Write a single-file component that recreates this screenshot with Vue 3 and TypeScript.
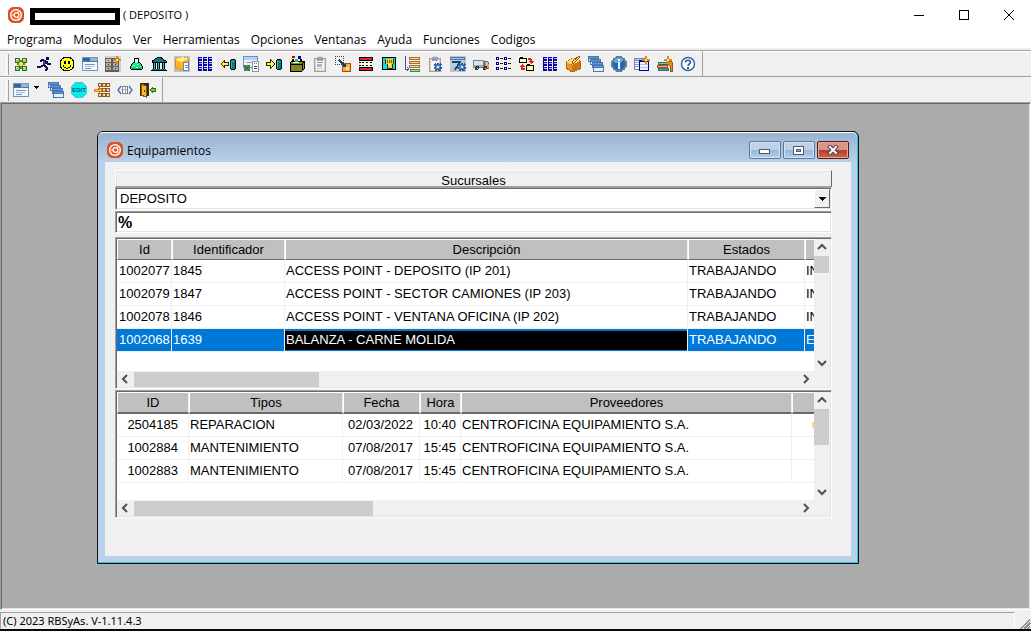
<script setup lang="ts">
import { ref } from 'vue'

interface Tool { name: string; art: string }
interface Column { label: string; cls: string }

const menus: string[] = ['Programa', 'Modulos', 'Ver', 'Herramientas', 'Opciones', 'Ventanas', 'Ayuda', 'Funciones', 'Codigos']

const r = (x: number, y: number, w: number, h: number, fill: string): string =>
  `<rect x="${x}" y="${y}" width="${w}" height="${h}" fill="${fill}"/>`
const p = (d: string, fill: string, stroke = 'none', width = 1): string =>
  `<path d="${d}" fill="${fill}" stroke="${stroke}" stroke-width="${width}"/>`
const c = (x: number, y: number, radius: number, fill: string, stroke = 'none', width = 1): string =>
  `<circle cx="${x}" cy="${y}" r="${radius}" fill="${fill}" stroke="${stroke}" stroke-width="${width}"/>`

const miniWindow = (x: number, y: number, w: number, h: number): string =>
  r(x, y, w, h, '#4a78b4') + r(x + 1, y + 3, w - 2, h - 4, '#e6f0fb') + r(x + 1, y + 1, w - 2, 1, '#5f9ad6')
const cascade = miniWindow(0, 0, 11, 6) + miniWindow(2, 3, 11, 6) + miniWindow(4, 6, 11, 6) + miniWindow(5, 9, 11, 7)
const windowArt =
  r(0, 1, 16, 14, '#7595b8') + r(1, 2, 14, 12, '#f2f7fc') + r(1, 2, 7, 3, '#2c66a4') + r(8, 2, 7, 3, '#8db8dc') +
  r(0, 5, 16, 1, '#4a7cb0') + r(3, 8, 10, 1, '#7096c4') + r(3, 10, 9, 1, '#a9c1df') + r(3, 12, 6, 1, '#7096c4')
const lattice = [1, 6, 11].map((x) =>
  [1, 3, 6, 8, 11, 13].map((y) => r(x, y, 4, 1, '#0000ff') + r(x, y + 1, 4, 1, y === 3 || y === 8 || y === 13 ? '#101040' : '#b8b8ff')).join('') + r(x, 1, 1, 14, '#000080')).join('')
const cylinder = (x: number): string =>
  r(x + 1, 3, 4, 11, '#000') + r(x, 4, 6, 9, '#000') + r(x + 1, 4, 4, 9, '#008080') + r(x + 1, 5, 3, 1, '#40b0a8') + r(x + 1, 6, 1, 6, '#48b0a8')
const gear = (x: number, y: number): string =>
  `<circle cx="${x}" cy="${y}" r="3.5" fill="#4f83c1" stroke="#285a98" stroke-width="2" stroke-dasharray="2 1"/>` + c(x, y, 1, '#d8e8fa')
const star = (x: number, y: number): string =>
  p(`M${x} ${y - 4}l1 3 3 1-3 1-1 3-1-3-3-1 3-1z`, '#ffe26a', '#d98a1c')
const clipboard =
  r(2, 2, 12, 14, '#c89a62') + r(3, 3, 10, 12, '#c3d2ef') + r(4, 4, 8, 10, '#f5f8ff') + r(5, 1, 6, 4, '#8f9db5') + r(7, 0, 2, 2, '#b9c2d2')
const box =
  p('M1 6l7-4 7 3v8l-8 3-6-4z', '#e89624', '#b8660c') + p('M1 6l7-4 7 3-8 4z', '#ffd969') + p('M7 9l8-4v8l-8 3z', '#c87714')

const mainTools: Tool[] = [
  { name: 'Módulos', art: [[2, 2], [9, 2], [2, 10], [9, 10]].map(([x, y]) => r(x, y, 5, 5, '#2d6f24') + r(x + 1, y + 1, 3, 3, '#9bd071') + r(x + 1, y + 1, 2, 1, '#e4f7c9')).join('') + r(4, 7, 8, 2, '#5a8c20') + r(7, 4, 2, 9, '#5a8c20') + r(6, 6, 4, 4, '#a09020') + r(7, 6, 2, 4, '#ffe04a') + r(6, 7, 4, 2, '#ffe04a') },
  { name: 'Ejecutar', art: r(10, 1, 3, 3, '#0b0b48') + p('M10 5L6 4 4 6M10 5l-2 4 3 3-1 3M8 9l-4 2H1M10 5l2 3h3', 'none', '#0b1048', 2) + r(7, 5, 2, 3, '#394a94') },
  { name: 'Usuario', art: c(8, 8, 7, '#ffff20', '#000') + r(5, 5, 2, 3, '#000') + r(9, 5, 2, 3, '#000') + p('M4 9l1 2 2 1h2l2-1 1-2', 'none', '#000') },
  { name: 'Ventana', art: windowArt },
  { name: 'Archivos', art: r(0, 0, 16, 16, '#d4d0cc') + [0, 7].map((x) => r(x, 2, 7, 14, '#625c58') + r(x + 1, 3, 5, 3, '#c8c4c0') + r(x + 1, 7, 5, 3, '#b0aca8') + r(x + 1, 11, 5, 3, '#b0aca8') + r(x + 3, 4, 1, 1, '#333') + r(x + 3, 8, 1, 1, '#333') + r(x + 3, 12, 1, 1, '#333')).join('') + star(12, 4) },
  { name: 'Laboratorio', art: r(6, 2, 5, 1, '#000') + r(6, 3, 1, 3, '#000') + r(10, 3, 1, 3, '#000') + r(7, 3, 3, 3, '#dff') + r(5, 6, 7, 1, '#000') + r(4, 7, 9, 1, '#000') + r(3, 8, 11, 2, '#000') + r(2, 10, 13, 3, '#000') + r(3, 13, 11, 1, '#000') + r(7, 6, 3, 1, '#8fe') + r(5, 7, 7, 1, '#12e878') + r(4, 8, 9, 2, '#12e878') + r(3, 10, 11, 3, '#12e878') + r(5, 9, 2, 1, '#d0ffe0') + r(9, 8, 1, 1, '#fff') + r(8, 11, 2, 1, '#fff') + r(4, 12, 9, 1, '#00b070') },
  { name: 'Bancos', art: p('M1 6V5l5-3V1h4v1l5 3v1z', '#008080', '#000') + r(1, 6, 14, 1, '#000') + [2, 6, 11].map((x) => r(x, 7, 3, 6, '#000') + r(x + 1, 7, 1, 6, '#50c0b8')).join('') + r(1, 13, 14, 1, '#008080') + r(0, 14, 16, 1, '#000') },
  { name: 'Productos', art: r(0, 0, 16, 16, '#c0c0c0') + p('M1 4l7-3 6 2v8l-7 3-6-3z', '#ffb51e', '#e88c00') + p('M1 4l7-3 6 2-7 3z', '#fff08a') + r(9, 6, 6, 9, '#6489b6') + r(10, 7, 4, 7, '#fff') + r(11, 9, 3, 1, '#6a90c0') + r(11, 11, 3, 1, '#6a90c0') },
  { name: 'Planilla', art: lattice },
  { name: 'Retirar', art: cylinder(10) + p('M0 8l5-5v3h4v4H5v3z', '#222') + p('M1 8l3-3v2h4v2H4v2z', '#ff0') },
  { name: 'Servidor', art: r(0, 0, 15, 12, '#6d91b9') + r(1, 1, 13, 3, '#b2d1f0') + r(1, 4, 13, 7, '#eef5fc') + r(3, 6, 7, 1, '#8ba7c8') + r(9, 5, 7, 11, '#8693a6') + r(10, 6, 5, 9, '#fff') + r(11, 7, 1, 1, '#c44') + r(13, 7, 1, 1, '#678') + r(11, 10, 3, 1, '#345') + r(11, 12, 3, 1, '#345') + c(4, 12, 3, '#548b57') + '<path d="M1 9l6 6M7 9l-6 6" stroke="#2f633b" stroke-width="1"/>' },
  { name: 'Ingresar', art: cylinder(10) + p('M0 6h4V3l5 5-5 5v-3H0z', '#222') + p('M1 7h4V5l3 3-3 3V9H1z', '#ff0') },
  { name: 'Depósito', art: p('M1 7l2-2h12v8l-2 2H1z', '#8b8420', '#000') + p('M2 8h11v6M13 8l2-2', 'none', '#000') + r(3, 0, 3, 2, '#d00') + r(9, 0, 3, 3, '#00c') + r(6, 3, 3, 3, '#00d060') + r(11, 3, 2, 2, '#000') + r(3, 3, 2, 2, '#000') + r(4, 6, 6, 1, '#fff') },
  { name: 'Portapapeles', art: clipboard + r(5, 6, 6, 1, '#6e94d0') + r(5, 8, 5, 3, '#9db9e2') + r(5, 12, 6, 1, '#b9cae8') },
  { name: 'Mover', art: [0, 2, 4, 6, 8].map((n) => r(n, 0, 1, 1, '#444') + r(n, 8, 1, 1, '#444') + r(0, n, 1, 1, '#444') + r(8, n, 1, 1, '#444')).join('') + r(7, 7, 9, 9, '#a94f12') + r(8, 8, 7, 7, '#ffa63a') + r(11, 11, 3, 3, '#ffe18a') + '<path d="M4 4l6 6" stroke="#173b80" stroke-width="1.5"/>' + p('M11 7v4H7z', '#173b80') },
  { name: 'Separar', art: r(1, 1, 14, 4, '#000') + r(2, 2, 12, 2, '#e61e1e') + [1, 4, 8, 12].map((x) => r(x, 6, 2, 1, '#000') + r(x, 9, 2, 1, '#000')).join('') + r(2, 7, 12, 2, '#fff') + r(1, 11, 14, 4, '#000') + r(2, 12, 12, 2, '#e61e1e') },
  { name: 'Autorizar', art: r(1, 1, 14, 13, '#000') + r(2, 2, 12, 11, '#00e5e8') + r(4, 3, 9, 5, '#403000') + r(5, 3, 7, 5, '#ffd22a') + r(6, 8, 6, 5, '#403000') + r(7, 8, 4, 4, '#ffd22a') + r(6, 4, 1, 3, '#8d5a00') + r(8, 4, 1, 3, '#8d5a00') + r(10, 4, 1, 3, '#8d5a00') + r(7, 8, 2, 1, '#fff') },
  { name: 'Ordenar', art: p('M1 0v13h4M3 11l2 2-2 2', 'none', '#315a9c') + [1, 5, 9].map((y) => r(5, y, 11, 3, '#a76b32') + r(6, y + 1, 9, 1, '#ffd78c')).join('') + r(6, 13, 10, 3, '#478746') + r(7, 14, 8, 1, '#a4df81') },
  { name: 'Configurar lista', art: clipboard + gear(11, 11) },
  { name: 'Configurar vista', art: r(0, 0, 16, 16, '#c0c4c8') + r(0, 1, 15, 3, '#4a7baa') + r(1, 2, 13, 1, '#9bc1e4') + r(1, 4, 13, 8, '#b8cce0') + '<path d="M2 6h8l-5 8" fill="none" stroke="#173f70" stroke-width="2"/>' + gear(12, 11) },
  { name: 'Transporte', art: r(0, 4, 11, 8, '#78848c') + r(1, 5, 9, 4, '#d9e4ec') + r(1, 9, 9, 2, '#8dabc4') + p('M11 5h3l2 3v4h-5z', '#ee984e', '#8c5a30') + r(13, 6, 2, 3, '#a8d1e8') + c(4, 12, 2, '#333') + c(12, 12, 2, '#333') + r(4, 12, 1, 1, '#ccc') + r(12, 12, 1, 1, '#ccc') },
  { name: 'Lista', art: [1, 6, 11].map((y) => [0, 8].map((x) => r(x, y, 3, 3, '#000080') + r(x + 1, y + 1, 1, 1, '#fff') + r(x + 4, y + 1, 3, 1, '#222')).join('')).join('') },
  { name: 'Transferir', art: r(1, 1, 3, 1, '#000') + r(0, 2, 8, 5, '#000') + r(1, 3, 6, 3, '#fff9a6') + r(8, 8, 3, 1, '#000') + r(7, 9, 8, 6, '#000') + r(8, 10, 6, 4, '#fff9a6') + r(9, 2, 3, 2, '#e32614') + r(11, 3, 2, 3, '#e32614') + p('M9 5h6l-3 3z', '#e32614') + r(3, 12, 3, 2, '#e32614') + r(2, 10, 2, 4, '#e32614') + p('M0 11h6L3 8z', '#e32614') },
  { name: 'Tabla', art: lattice },
  { name: 'Artículos', art: box + p('M15 1L9 7 7 8l1-3 6-5z', '#ffe783', '#916017') },
  { name: 'Cascada', art: cascade },
  { name: 'Información', art: c(8, 8, 7, '#2369ae', '#5d7fa6', 2) + p('M3 4l3-2h4l3 2-4 3H4z', '#69a8dc') + r(7, 3, 2, 2, '#fff') + r(7, 6, 2, 7, '#fff') },
  { name: 'Nueva tabla', art: r(0, 2, 13, 12, '#6b87ab') + r(1, 5, 11, 8, '#fff') + r(1, 3, 11, 1, '#b9cbe5') + [6, 8, 10].map((y) => r(1, y, 10, 1, '#8aa2c7')).join('') + r(5, 4, 10, 11, '#0000a8') + r(6, 6, 8, 8, '#eef3fc') + r(6, 8, 8, 1, '#b8c7dd') + r(6, 11, 8, 1, '#b8c7dd') + star(12, 4) },
  { name: 'Biblioteca', art: r(1, 6, 10, 3, '#28745f') + r(2, 7, 8, 1, '#83c7a2') + r(0, 9, 11, 3, '#b54b23') + r(1, 10, 9, 1, '#ffb354') + r(1, 12, 11, 3, '#2c6d8c') + r(2, 13, 9, 1, '#4fae7a') + p('M12 5l-1 3 2 2v5h2V6z', '#e48d28', '#9e5514') + star(11, 4) },
  { name: 'Ayuda', art: '<g shape-rendering="auto"><circle cx="8" cy="8" r="6.5" fill="#fff" stroke="#2e6da6" stroke-width="1.5"/><path d="M5.5 6.5c0-3 5-3 5 0 0 1.5-2.5 1.5-2.5 3.5" fill="none" stroke="#255f9c" stroke-width="1.6"/></g>' + r(7, 11, 2, 2, '#255f9c') }
]

const editTools: Tool[] = [
  { name: 'Cascada de ventanas', art: cascade },
  { name: 'Editar', art: p('M5 0h6l5 5v6l-5 5H5l-5-5V5z', '#00eef2', '#6ab4b8') + '<text x="8" y="10" text-anchor="middle" font-family="Liberation Sans, sans-serif" font-weight="bold" font-size="6" fill="#045c68">EDIT</text>' },
  { name: 'Insertar fila', art: [1, 6, 11].map((y) => r(4, y, 12, 4, '#8b622f') + [5, 9, 13].map((x) => r(x, y + 1, 2, 2, '#ffdc92')).join('')).join('') + p('M0 7h5V5l3 3-3 3V9H0z', '#ffc73b', '#df8315') },
  { name: 'Ajustar columna', art: '<path d="M4 4L1 8l3 4M12 4l3 4-3 4" fill="none" stroke="#4a6daa" stroke-width="1.3" shape-rendering="auto"/>' + r(5, 4, 6, 8, '#76818f') + r(6, 5, 4, 6, '#fff') + r(8, 5, 1, 6, '#aab') + r(6, 7, 4, 1, '#aab') },
  { name: 'Salir', art: r(0, 1, 9, 13, '#402a00') + r(1, 2, 7, 11, '#1e2440') + p('M1 2l5 2v11l-5-2z', '#f7b82e', '#8a5b00') + r(4, 8, 1, 2, '#513600') + p('M9 8l4-4v2h3v4h-3v2z', '#28751c') + p('M10 8l2-2v1h3v2h-3v1z', '#70c936') }
]

const branch = ref('DEPOSITO')
const filter = ref('%')

const equipmentColumns: Column[] = [
  { label: 'Id', cls: 'w-id' }, { label: 'Identificador', cls: 'w-ident' }, { label: 'Descripción', cls: 'w-auto' },
  { label: 'Estados', cls: 'w-state' }, { label: '', cls: 'w-cut' }
]
const equipment: string[][] = [
  ['1002077', '1845', 'ACCESS POINT - DEPOSITO (IP 201)', 'TRABAJANDO', 'IN'],
  ['1002079', '1847', 'ACCESS POINT - SECTOR CAMIONES (IP 203)', 'TRABAJANDO', 'IN'],
  ['1002078', '1846', 'ACCESS POINT - VENTANA OFICINA (IP 202)', 'TRABAJANDO', 'IN'],
  ['1002068', '1639', 'BALANZA - CARNE MOLIDA', 'TRABAJANDO', 'E']
]
const selected = ref(3)

const serviceColumns: Column[] = [
  { label: 'ID', cls: 'w-num' }, { label: 'Tipos', cls: 'w-type' }, { label: 'Fecha', cls: 'w-date' },
  { label: 'Hora', cls: 'w-hour' }, { label: 'Proveedores', cls: 'w-auto' }, { label: '', cls: 'w-rest' }
]
const services: string[][] = [
  ['2504185', 'REPARACION', '02/03/2022', '10:40', 'CENTROFICINA EQUIPAMIENTO S.A.', ''],
  ['1002884', 'MANTENIMIENTO', '07/08/2017', '15:45', 'CENTROFICINA EQUIPAMIENTO S.A.', ''],
  ['1002883', 'MANTENIMIENTO', '07/08/2017', '15:45', 'CENTROFICINA EQUIPAMIENTO S.A.', '']
]
const logo =
  '<rect x="0.5" y="0.5" width="15" height="15" rx="5" fill="#e2531f" stroke="#d0502c"/>' +
  '<circle cx="8" cy="8" r="6" fill="#fff"/>' +
  '<circle cx="8" cy="8" r="4.6" fill="#e2531f"/>' +
  '<circle cx="8.5" cy="8" r="2.4" fill="#e2531f" stroke="#fff" stroke-width="1.3"/>' +
  '<path d="M4 8h2M10.5 4.5l-1 1.5M10.5 11.5l-1-1.5" stroke="#fff" stroke-width="1.2"/>'
</script>

<template>
  <div class="app">
    <header class="titlebar">
      <svg class="icon smooth" viewBox="0 0 16 16" v-html="logo" />
      <span class="blank" />
      <span class="caption">( DEPOSITO )</span>
      <div class="sysbuttons">
        <button aria-label="Minimizar"><svg viewBox="0 0 12 12"><path d="M1 6.5h10" stroke="#000" /></svg></button>
        <button aria-label="Maximizar"><svg viewBox="0 0 12 12"><rect x="1.5" y="1.5" width="9" height="9" fill="none" stroke="#000" /></svg></button>
        <button aria-label="Cerrar"><svg class="smooth" viewBox="0 0 12 12"><path d="M1 1l10 10M11 1L1 11" stroke="#000" /></svg></button>
      </div>
    </header>

    <nav class="menubar">
      <button v-for="m in menus" :key="m">{{ m }}</button>
    </nav>

    <div class="bands">
      <div class="band">
        <div class="toolbar">
          <button v-for="t in mainTools" :key="t.name" class="tool" :aria-label="t.name">
            <svg class="icon" viewBox="0 0 16 16" v-html="t.art" />
          </button>
        </div>
      </div>
      <div class="band">
        <div class="toolbar">
          <button class="tool drop" aria-label="Nueva ventana">
            <svg class="icon" viewBox="0 0 16 16" v-html="windowArt" />
            <svg class="caret" viewBox="0 0 5 3"><path d="M0 0h5L2.5 3z" /></svg>
          </button>
          <button v-for="t in editTools" :key="t.name" class="tool" :aria-label="t.name">
            <svg class="icon" viewBox="0 0 16 16" v-html="t.art" />
          </button>
        </div>
      </div>
    </div>

    <main class="desktop">
      <section class="child">
        <div class="frame">
          <div class="childbar">
            <svg class="icon smooth" viewBox="0 0 16 16" v-html="logo" />
            <h1>Equipamientos</h1>
            <div class="aero">
              <button aria-label="Minimizar ventana"><svg viewBox="0 0 14 10"><rect x="1.5" y="4.5" width="10" height="4" rx="1" fill="#fff" stroke="#4e5868" /></svg></button>
              <button aria-label="Maximizar ventana"><svg viewBox="0 0 14 10"><path d="M1.5 1.5h10v8h-10z" fill="#fff" stroke="#4e5868" /><path d="M4.5 4.5h4v2h-4z" fill="#9ab8da" stroke="#4e5868" /></svg></button>
              <button class="close" aria-label="Cerrar ventana"><svg class="smooth" viewBox="0 0 14 10"><path d="M4 2l6 6M10 2L4 8" stroke="#4a4250" stroke-width="4" stroke-linecap="square" /><path d="M4 2l6 6M10 2L4 8" stroke="#fff" stroke-width="2" stroke-linecap="square" /></svg></button>
            </div>
          </div>
          <div class="client">
            <label class="strip" for="branch">Sucursales</label>
            <div class="combo">
              <select id="branch" v-model="branch"><option>DEPOSITO</option></select>
              <span class="arrow"><svg class="combo-caret" viewBox="0 0 7 4"><path d="M0 0h7L3.5 4z" /></svg></span>
            </div>
            <input v-model="filter" class="filter" type="text" aria-label="Filtro">

            <div class="grid first">
              <div class="view">
                <table class="equipment">
                  <thead><tr><th v-for="(col, i) in equipmentColumns" :key="i" :class="col.cls">{{ col.label }}</th></tr></thead>
                  <tbody>
                    <tr v-for="(row, i) in equipment" :key="row[0]" :class="{ selected: i === selected }" @click="selected = i">
                      <td v-for="(cell, j) in row" :key="j">{{ cell }}</td>
                    </tr>
                  </tbody>
                </table>
              </div>
              <div class="vbar">
                <svg viewBox="0 0 16 16"><path d="M4 10l4-4 4 4" /></svg>
                <span class="thumb" />
                <svg viewBox="0 0 16 16"><path d="M4 6l4 4 4-4" /></svg>
              </div>
              <div class="hbar">
                <svg viewBox="0 0 16 16"><path d="M10 4L6 8l4 4" /></svg>
                <span class="thumb" />
                <svg viewBox="0 0 16 16"><path d="M6 4l4 4-4 4" /></svg>
              </div>
            </div>

            <div class="grid second">
              <div class="view">
                <table class="services">
                  <thead><tr><th v-for="(col, i) in serviceColumns" :key="i" :class="col.cls">{{ col.label }}</th></tr></thead>
                  <tbody>
                    <tr v-for="(row, i) in services" :key="row[0]">
                      <td v-for="(cell, j) in row" :key="j" :class="{ mark: i === 0 && j === 5 }">{{ cell }}</td>
                    </tr>
                  </tbody>
                </table>
              </div>
              <div class="vbar">
                <svg viewBox="0 0 16 16"><path d="M4 10l4-4 4 4" /></svg>
                <span class="thumb" />
                <svg viewBox="0 0 16 16"><path d="M4 6l4 4 4-4" /></svg>
              </div>
              <div class="hbar">
                <svg viewBox="0 0 16 16"><path d="M10 4L6 8l4 4" /></svg>
                <span class="thumb" />
                <svg viewBox="0 0 16 16"><path d="M6 4l4 4-4 4" /></svg>
              </div>
            </div>
          </div>
        </div>
      </section>
    </main>

    <footer class="status">
      <span class="pane">(C) 2023 RBSyAs. V-1.11.4.3</span>
      <svg class="sizer" viewBox="0 0 14 14"><path d="M3 14L14 3M7 14l7-7M11 14l3-3" stroke="#8c8c8c" stroke-width="2" /></svg>
    </footer>
  </div>
</template>

<style>
body { margin: 0; background: #000; }
</style>

<style scoped>
.app {
  display: flex;
  flex-direction: column;
  min-height: 100vh;
  box-sizing: border-box;
  border-bottom: 2px solid #08080c;
  background: #f0f0f0;
  color: #000;
  font: 12px/16px "Open Sans", "Noto Sans", sans-serif;
}
button { margin: 0; padding: 0; border: 0; background: none; color: inherit; font: inherit; }
svg { display: block; flex: none; shape-rendering: crispEdges; }
.smooth { shape-rendering: auto; }
.icon { width: 16px; height: 16px; }

.titlebar { display: flex; align-items: center; height: 29px; padding-left: 8px; background: #fff; }
.blank { width: 80px; height: 7px; margin: 4px 3px 0 6px; border: 5px solid #000; }
.caption { font-size: 11px; }
.sysbuttons { display: flex; margin-left: auto; }
.sysbuttons button { display: flex; justify-content: center; width: 45px; }
.sysbuttons svg { width: 12px; height: 12px; }

.menubar { display: flex; gap: 11px; height: 19px; padding: 0 7px; background: #fff; }
.menubar button { height: 21px; font-size: 12px; }

.bands { padding-top: 2px; }
.band { display: flex; border-top: 1px solid #a0a0a0; }
.toolbar {
  display: flex;
  align-items: center;
  height: 24px;
  padding: 0 2px 0 3px;
  border-top: 1px solid #fff;
  border-right: 1px solid #a0a0a0;
}
.band:first-child { box-shadow: inset 0 1px #fff; }
.toolbar::before { content: ""; width: 1px; height: 21px; margin: 0 1px 0 3px; border-left: 1px solid #fff; border-right: 1px solid #a0a0a0; }
.tool { display: flex; align-items: center; width: 23px; height: 22px; padding-left: 3px; }
.drop { gap: 5px; width: 35px; }
.caret { width: 5px; height: 3px; margin-top: -5px; }

.desktop {
  position: relative;
  flex: 1;
  min-height: 464px;
  border: 1px solid;
  border-color: #a0a0a0 #fff #fff #a0a0a0;
  box-shadow: inset 1px 1px #696969, inset -1px -1px #e3e3e3;
  background: #ababab;
}
.child {
  position: absolute;
  left: 96px;
  top: 28px;
  width: 762px;
  box-sizing: border-box;
  border: 1px solid #101010;
  border-radius: 6px 6px 0 0;
  background: #28c8e0;
}
.frame {
  margin-right: 1px;
  margin-bottom: 1px;
  padding: 0 6px 6px 7px;
  border-top: 1px solid #fff;
  border-radius: 5px 5px 0 0;
  background: linear-gradient(#99b4d1, #b9d1ea 30px);
}
.childbar { display: flex; align-items: center; height: 29px; padding: 0 2px; }
h1 { flex: 1; margin: 7px 0 0 4px; font: 12px/16px "Open Sans", "Noto Sans", sans-serif; }
.childbar .icon { margin-top: 4px; }
.aero { display: flex; gap: 2px; margin-top: 4px; }
.aero button {
  display: flex;
  align-items: center;
  justify-content: center;
  width: 32px;
  height: 18px;
  border: 1px solid #5d779a;
  border-radius: 2px;
  box-shadow: inset 0 0 0 1px #d5e4f5;
  background: linear-gradient(#bdd2e9 50%, #98b6d8 50%, #b4cfea);
}
.aero .close { border-color: #5b1c18; box-shadow: inset 0 0 0 1px #e7a898; background: linear-gradient(#dc9484 50%, #b53b22 50%, #c96a4e); }
.aero svg { width: 14px; height: 10px; }

.client {
  display: flex;
  flex-direction: column;
  padding: 8px 19px 38px 10px;
  background: #f0f0f0;
  font: 13px/16px "Liberation Sans", Arial, sans-serif;
}
.strip {
  height: 15px;
  border: 1px solid;
  border-color: #fff #696969 #a0a0a0 #fff;
  box-shadow: inset 1px 1px #e3e3e3;
  line-height: 20px;
  text-align: center;
}
.combo, .filter, .grid {
  border: 1px solid;
  border-color: #a0a0a0 #fff #fff #a0a0a0;
  box-shadow: inset 1px 1px #696969, inset -1px -1px #e3e3e3;
}
.combo { display: flex; position: relative; height: 21px; background: #fff; }
select {
  flex: 1;
  appearance: none;
  margin: 1px;
  padding: 0 18px 0 3px;
  border: 0;
  border-radius: 0;
  background: transparent;
  color: #000;
  font: inherit;
  outline: 0;
}
.arrow {
  position: absolute;
  top: 1px;
  right: 1px;
  bottom: 1px;
  display: flex;
  align-items: center;
  justify-content: center;
  width: 14px;
  border: 1px solid;
  border-color: #fff #696969 #696969 #fff;
  background: #f0f0f0;
  pointer-events: none;
}
.combo-caret { width: 7px; height: 4px; }
.filter {
  height: 22px;
  margin: 1px 0 4px;
  box-sizing: border-box;
  padding: 1px 2px 0;
  border-radius: 0;
  background: #fff;
  color: #000;
  font: bold 16px/18px "Liberation Sans", Arial, sans-serif;
  outline: 0;
}

.grid { display: grid; grid-template-columns: 1fr 16px; padding: 1px; background: #f0f0f0; }
.first { grid-template-rows: 132px 16px; margin-bottom: 1px; }
.second { grid-template-rows: 108px 16px; }
.view { overflow: hidden; background: #fff; }
table { width: 100%; table-layout: fixed; border-collapse: separate; border-spacing: 0; }
th {
  height: 20px;
  padding: 0;
  box-sizing: border-box;
  border: 1px solid;
  border-color: #fff #f0f0f0 #696969 #fff;
  background: #c0c0c0;
  font-weight: normal;
  line-height: 17px;
}
.first th { height: 21px; }
.second th { height: 22px; border-bottom-width: 2px; }
td {
  height: 23px;
  padding: 0 0 0 1px;
  box-sizing: border-box;
  overflow: hidden;
  border-right: 1px solid #f0f0f0;
  border-bottom: 1px solid #f0f0f0;
  line-height: 22px;
  white-space: nowrap;
}
.w-id { width: 55px; }
.w-ident { width: 113px; }
.w-state { width: 117px; }
.w-cut { width: 9px; }
.w-num { width: 72px; }
.w-type { width: 154px; }
.w-date { width: 77px; }
.w-hour { width: 41px; }
.w-rest { width: 22px; }
th:last-child, td:last-child { border-right: 0; }
.equipment td:first-child { padding-left: 2px; }
.services td:first-child, .services td:nth-child(3), .services td:nth-child(4) { text-align: right; }
.services td:first-child { padding-right: 10px; }
.services td:nth-child(3) { padding-right: 6px; }
.services td:nth-child(4) { padding-right: 4px; }
.mark { background: linear-gradient(#ffd978, #ffd978) right center / 2px 6px no-repeat; }
.selected td { background: #0078d7; color: #fff; }
.selected td:nth-child(3) { background: #000; box-shadow: inset 0 2px #0078d7, inset 0 -1px #0078d7; }

.vbar { display: flex; flex-direction: column; justify-content: space-between; }
.vbar svg, .hbar svg { width: 16px; height: 16px; shape-rendering: auto; }
.vbar path, .hbar path { fill: none; stroke: #505050; stroke-width: 2; }
.thumb { display: block; background: #cdcdcd; }
.vbar .thumb { width: 15px; height: 17px; margin-top: 1px; margin-bottom: auto; }
.second .vbar .thumb { height: 36px; }
.hbar { display: flex; align-items: center; }
.hbar .thumb { width: 185px; height: 15px; margin: 0 auto 0 1px; }
.second .hbar .thumb { width: 239px; }

.status { display: flex; align-items: flex-end; padding-top: 2px; }
.pane {
  flex: 1;
  height: 15px;
  padding-left: 2px;
  border: 1px solid;
  border-color: #a0a0a0 #fff #f0f0f0 #a0a0a0;
  font: 11px/15px "Noto Sans", "Open Sans", sans-serif;
}
.sizer { width: 14px; height: 12px; margin-left: 2px; }
</style>
